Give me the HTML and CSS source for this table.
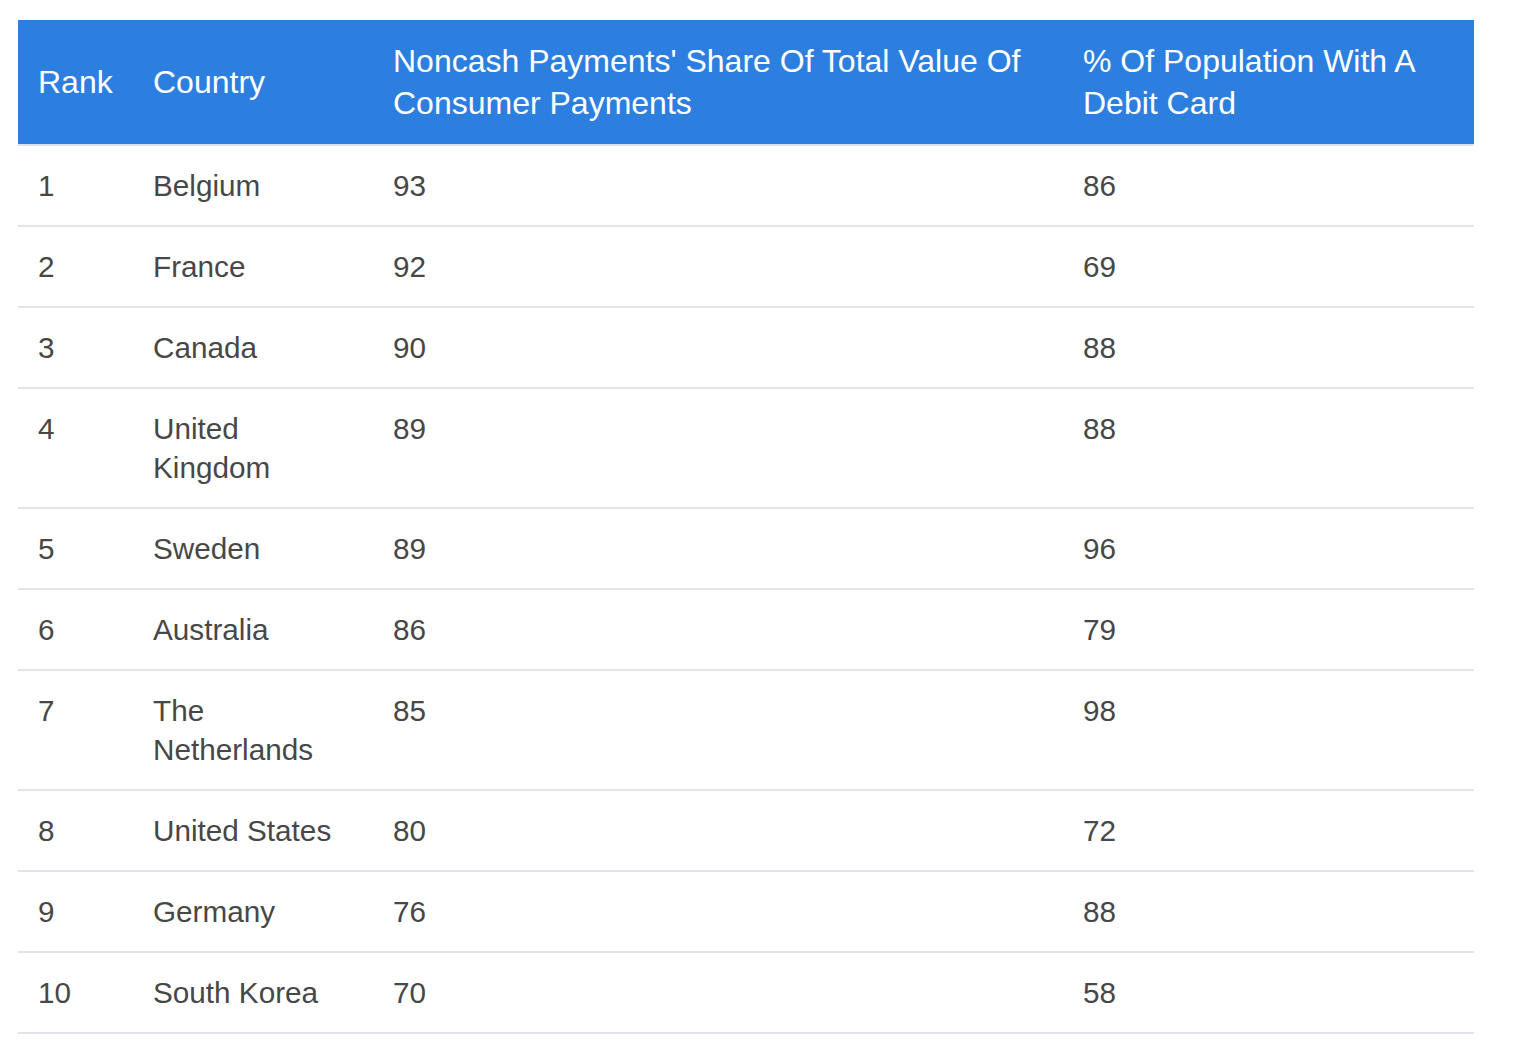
FILE: index.html
```html
<!DOCTYPE html>
<html lang="en">
<head>
<meta charset="utf-8">
<title>Noncash payments ranking</title>
<link rel="stylesheet" href="styles.css">
</head>
<body>
<main class="page">
  <table class="ranking">
    <colgroup>
      <col class="c-rank">
      <col class="c-country">
      <col class="c-share">
      <col class="c-debit">
    </colgroup>
    <thead>
      <tr>
        <th>Rank</th>
        <th>Country</th>
        <th>Noncash Payments' Share Of Total Value Of Consumer Payments</th>
        <th>% Of Population With A Debit Card</th>
      </tr>
    </thead>
    <tbody>
      <tr><td>1</td><td>Belgium</td><td>93</td><td>86</td></tr>
      <tr><td>2</td><td>France</td><td>92</td><td>69</td></tr>
      <tr><td>3</td><td>Canada</td><td>90</td><td>88</td></tr>
      <tr><td>4</td><td>United Kingdom</td><td>89</td><td>88</td></tr>
      <tr><td>5</td><td>Sweden</td><td>89</td><td>96</td></tr>
      <tr><td>6</td><td>Australia</td><td>86</td><td>79</td></tr>
      <tr><td>7</td><td>The Netherlands</td><td>85</td><td>98</td></tr>
      <tr><td>8</td><td>United States</td><td>80</td><td>72</td></tr>
      <tr><td>9</td><td>Germany</td><td>76</td><td>88</td></tr>
      <tr><td>10</td><td>South Korea</td><td>70</td><td>58</td></tr>
    </tbody>
  </table>
</main>
</body>
</html>
```
FILE: styles.css
```css
html, body {
  margin: 0;
  padding: 0;
  background: #ffffff;
}

.page {
  padding: 20px 0 0 18px;
  font-family: "Liberation Sans", Arial, Helvetica, sans-serif;
}

.ranking {
  width: 1456px;
  border-collapse: collapse;
  table-layout: fixed;
}

.c-rank { width: 115px; }
.c-country { width: 240px; }
.c-share { width: 690px; }
.c-debit { width: 411px; }

.ranking th {
  background: #2d7fdf;
  color: #ffffff;
  font-weight: normal;
  font-size: 32px;
  line-height: 42px;
  text-align: left;
  vertical-align: middle;
  padding: 20px 20px;
  border-bottom: 2px solid #dee2ea;
}

.ranking td {
  color: #474747;
  font-size: 29.7px;
  line-height: 39px;
  text-align: left;
  vertical-align: top;
  padding: 20px 20px;
  border-bottom: 2px solid #e1e4ec;
}
```
